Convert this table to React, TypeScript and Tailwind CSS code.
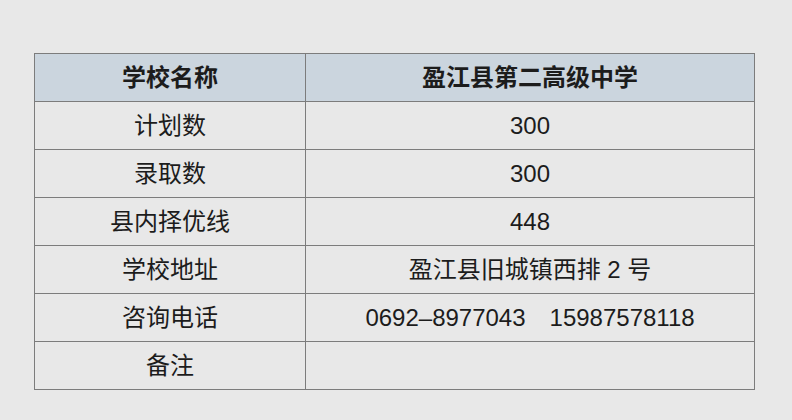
const rows: [string, React.ReactNode][] = [
  ['计划数', '300'],
  ['录取数', '300'],
  ['县内择优线', '448'],
  ['学校地址', '盈江县旧城镇西排 2 号'],
  [
    '咨询电话',
    <>
      <span>0692–8977043</span>
      <span className="ml-[24px]">15987578118</span>
    </>,
  ],
  ['备注', ''],
]

export default function App() {
  return (
    <div
      className="w-[792px] h-[420px] bg-[#e8e8e8] pt-[53px] pl-[34px] text-[#1c1c1c]"
      style={{ fontFamily: '"Liberation Sans", "Noto Sans CJK SC", sans-serif' }}
    >
      <div className="grid grid-cols-[271px_449px] w-[721px] border-l border-t border-[#7c7c7c]">
        <div className="h-[48px] flex items-center justify-center bg-[#cbd5de] border-r border-b border-[#7c7c7c] text-[24px] font-bold">
          学校名称
        </div>
        <div className="h-[48px] flex items-center justify-center bg-[#cbd5de] border-r border-b border-[#7c7c7c] text-[24px] font-bold">
          盈江县第二高级中学
        </div>
        {rows.map(([k, v]) => (
          <div key={k} className="contents">
            <div className="h-[48px] flex items-center justify-center border-r border-b border-[#7c7c7c] text-[24px]">
              {k}
            </div>
            <div className="h-[48px] flex items-center justify-center border-r border-b border-[#7c7c7c] text-[24px]">
              {v}
            </div>
          </div>
        ))}
      </div>
    </div>
  )
}
